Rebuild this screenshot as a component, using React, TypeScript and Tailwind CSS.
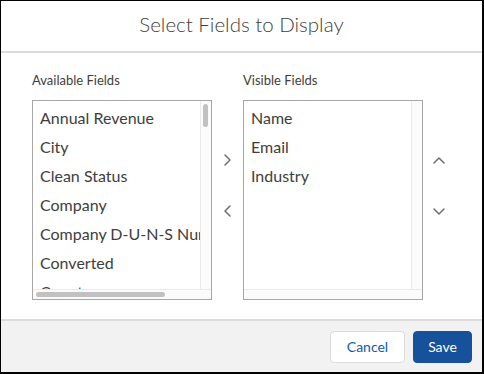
import React from 'react';

const available = [
  'Annual Revenue',
  'City',
  'Clean Status',
  'Company',
  'Company D-U-N-S Number',
  'Converted',
  'Country',
];

const visible = ['Name', 'Email', 'Industry'];

function Chevron({ dir }: { dir: 'left' | 'right' | 'up' | 'down' }) {
  const d = {
    right: 'M4 2 L9 7 L4 12',
    left: 'M9 2 L4 7 L9 12',
    up: 'M2 9 L7 4 L12 9',
    down: 'M2 5 L7 10 L12 5',
  }[dir];
  return (
    <svg width="14" height="14" viewBox="0 0 14 14" fill="none">
      <path d={d} stroke="#706e6b" strokeWidth="1.5" strokeLinecap="round" strokeLinejoin="round" />
    </svg>
  );
}

export default function App() {
  return (
    <div
      className="w-[484px] h-[374px] bg-white border-t border-l border-r-2 border-b-2 border-black flex flex-col overflow-hidden"
      style={{ fontFamily: 'Lato, "Open Sans", sans-serif' }}
    >
      {/* header */}
      <div className="h-[52px] flex items-center justify-center border-b-2 border-[#dddbda] shrink-0">
        <h2 className="text-[20.5px] text-[#3e3e3c] font-light -mt-[3px]">Select Fields to Display</h2>
      </div>

      {/* body */}
      <div className="flex-1 flex pl-[31px] pt-[20px]">
        <div className="flex flex-col">
          <div className="text-[13px] text-[#3e3e3c] h-[14px] leading-[14px] mb-[13px]">Available Fields</div>
          <div className="relative w-[180px] h-[200px] border border-[#a8a7a6] overflow-hidden">
            <ul className="pl-[7px] pt-[2px]">
              {available.map((f) => (
                <li key={f} className="h-[29px] leading-[29px] text-[16px] text-[#3e3e3c] whitespace-nowrap">
                  {f}
                </li>
              ))}
            </ul>
            {/* scroll tracks */}
            <div className="absolute right-0 top-0 bottom-[10px] w-[11px] bg-[#fbfbfb] border-l border-[#ebebeb]">
              <div className="absolute left-[2px] top-[3px] w-[5px] h-[23px] rounded-full bg-[#c1c1c1]" />
            </div>
            <div className="absolute left-0 right-0 bottom-0 h-[10px] bg-[#fbfbfb] border-t border-[#ebebeb]">
              <div className="absolute left-[3px] top-[2px] w-[129px] h-[5px] rounded-full bg-[#c1c1c1]" />
            </div>
          </div>
        </div>

        <div className="w-[31px] flex flex-col items-center pt-[80px] gap-[37px]">
          <Chevron dir="right" />
          <Chevron dir="left" />
        </div>

        <div className="flex flex-col">
          <div className="text-[13px] text-[#3e3e3c] h-[14px] leading-[14px] mb-[13px]">Visible Fields</div>
          <div className="relative w-[180px] h-[200px] border border-[#a8a7a6] overflow-hidden">
            <ul className="pl-[7px] pt-[2px]">
              {visible.map((f) => (
                <li key={f} className="h-[29px] leading-[29px] text-[16px] text-[#3e3e3c] whitespace-nowrap">
                  {f}
                </li>
              ))}
            </ul>
            <div className="absolute right-0 top-0 bottom-[10px] w-[11px] bg-[#fbfbfb] border-l border-[#ebebeb]" />
            <div className="absolute left-0 right-0 bottom-0 h-[10px] bg-[#fbfbfb] border-t border-[#ebebeb]" />
          </div>
        </div>

        <div className="w-[32px] flex flex-col items-center pt-[81px] gap-[36px]">
          <Chevron dir="up" />
          <Chevron dir="down" />
        </div>
      </div>

      {/* footer */}
      <div className="h-[53px] shrink-0 bg-[#f3f2f2] border-t-2 border-[#dddbda] flex items-center justify-end gap-[8px] pr-[10px]">
        <button className="w-[75px] h-[32px] rounded-[4px] bg-white border border-[#dddbda] text-[14px] text-[#0b5cab]">
          Cancel
        </button>
        <button className="w-[59px] h-[32px] rounded-[4px] bg-[#16529b] border border-[#16529b] text-[14px] text-white">
          Save
        </button>
      </div>
    </div>
  );
}
